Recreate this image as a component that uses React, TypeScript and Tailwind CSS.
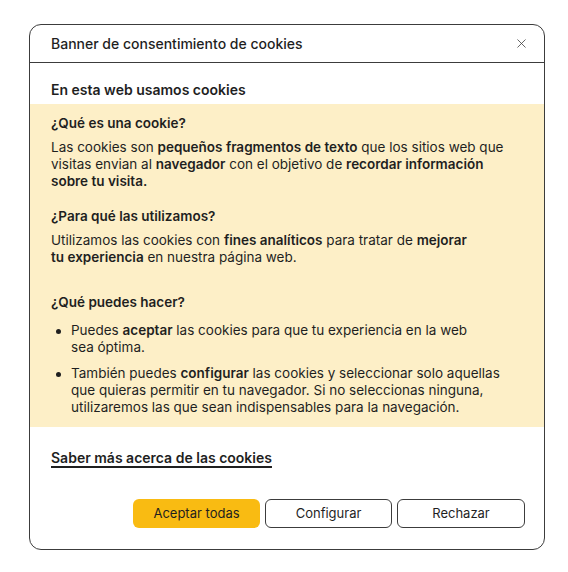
import { X } from 'lucide-react';

const font = { fontFamily: 'Inter, "Noto Sans", sans-serif' };

function Bullet({ children }: { children: React.ReactNode }) {
  return (
    <li className="flex gap-[10px]">
      <span className="mt-[7px] h-[5px] w-[5px] shrink-0 rounded-full bg-[#1f1f1f] ml-[5px]" />
      <span className="whitespace-nowrap">{children}</span>
    </li>
  );
}

export default function App() {
  return (
    <div className="min-h-screen bg-white pt-[24px] pl-[29px]" style={font}>
      <div className="w-[516px] rounded-[12px] border border-[#3c3c3c] text-[#1f1f1f] overflow-hidden">
        {/* header */}
        <div className="h-[38px] flex items-center justify-between pl-[21px] pr-[15px] border-b border-[#3c3c3c]">
          <span className="text-[14px] leading-[17px] font-medium">Banner de consentimiento de cookies</span>
          <X size={15} strokeWidth={1.25} className="text-[#3c3c3c]" />
        </div>

        <p className="pt-[18px] pb-[6px] px-[21px] text-[14px] leading-[17px] font-semibold">
          En esta web usamos cookies
        </p>

        {/* info block */}
        <div className="bg-[#fdefc7] px-[21px] pt-[11px] pb-[11px] text-[13.5px] leading-[17px]">
          <h3 className="font-semibold">¿Qué es una cookie?</h3>
          <p className="mt-[7px] whitespace-nowrap">
            Las cookies son <b className="font-semibold">pequeños fragmentos de texto</b> que los sitios web que
            <br />
            visitas envian al <b className="font-semibold">navegador</b> con el objetivo de{' '}
            <b className="font-semibold">recordar información</b>
            <br />
            <b className="font-semibold">sobre tu visita.</b>
          </p>

          <h3 className="mt-[18px] font-semibold">¿Para qué las utilizamos?</h3>
          <p className="mt-[7px] whitespace-nowrap">
            Utilizamos las cookies con <b className="font-semibold">fines analíticos</b> para tratar de{' '}
            <b className="font-semibold">mejorar</b>
            <br />
            <b className="font-semibold">tu experiencia</b> en nuestra página web.
          </p>

          <h3 className="mt-[28px] font-semibold">¿Qué puedes hacer?</h3>
          <ul className="mt-[11px] flex flex-col gap-[9px]">
            <Bullet>
              Puedes <b className="font-semibold">aceptar</b> las cookies para que tu experiencia en la web
              <br />
              sea óptima.
            </Bullet>
            <Bullet>
              También puedes <b className="font-semibold">configurar</b> las cookies y seleccionar solo aquellas
              <br />
              que quieras permitir en tu navegador. Si no seleccionas ninguna,
              <br />
              utilizaremos las que sean indispensables para la navegación.
            </Bullet>
          </ul>
        </div>

        <div className="px-[21px] pt-[18px]">
          <a href="#" className="text-[14px] leading-[17px] font-semibold underline underline-offset-[3px] decoration-[1.5px]">
            Saber más acerca de las cookies
          </a>
        </div>

        <div className="flex justify-end gap-[5px] pr-[19px] pt-[30px] pb-[21px]">
          <button className="w-[127px] h-[29px] rounded-[6px] bg-[#f9bb12] text-[13px]">Aceptar todas</button>
          <button className="w-[127px] h-[29px] rounded-[6px] border border-[#3c3c3c] text-[13px]">Configurar</button>
          <button className="w-[128px] h-[29px] rounded-[6px] border border-[#3c3c3c] text-[13px]">Rechazar</button>
        </div>
      </div>
    </div>
  );
}
